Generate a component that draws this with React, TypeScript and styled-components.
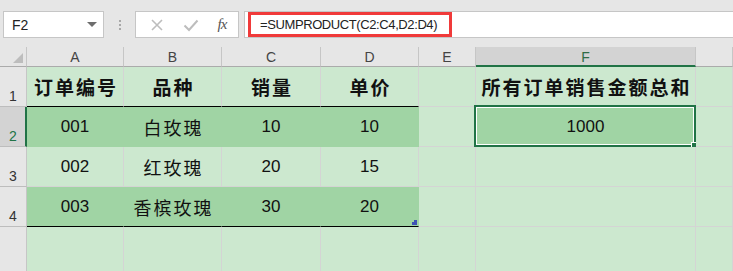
import React from 'react';
import styled, { createGlobalStyle } from 'styled-components';

const GlobalStyle = createGlobalStyle`
  html, body {
    margin: 0;
    padding: 0;
    overflow: hidden;
    background: #e6e6e6;
  }
  body {
    font-family: 'Liberation Sans', 'Noto Sans CJK SC', sans-serif;
  }
`;

const Page = styled.div`
  width: 733px;
  height: 271px;
  overflow: hidden;
  background: #e6e6e6;
`;

const Toolbar = styled.div`
  height: 47px;
  display: flex;
  align-items: flex-start;
  padding: 11px 0 0 3px;
  box-sizing: border-box;
`;

const NameBox = styled.div`
  width: 101px;
  height: 27px;
  box-sizing: border-box;
  background: #fff;
  border: 1px solid #c6c6c6;
  display: flex;
  align-items: center;
  justify-content: space-between;
  padding: 0 6px 0 8px;
  font-size: 14px;
  color: #222;
`;

const Caret = styled.span`
  width: 0;
  height: 0;
  border-left: 5px solid transparent;
  border-right: 5px solid transparent;
  border-top: 5px solid #6d6d6d;
`;

const Grip = styled.div`
  width: 31px;
  height: 27px;
  display: flex;
  flex-direction: column;
  align-items: center;
  justify-content: center;
  gap: 2px;

  span {
    width: 2px;
    height: 2px;
    background: #a8a8a8;
  }
`;

const IconBox = styled.div`
  width: 104px;
  height: 27px;
  box-sizing: border-box;
  background: #fff;
  border: 1px solid #c6c6c6;
  display: flex;
  align-items: center;
  justify-content: space-around;
  padding: 0 2px 0 4px;
`;

const Fx = styled.span`
  font-family: 'Liberation Serif', serif;
  font-style: italic;
  font-size: 15px;
  color: #555;
  letter-spacing: -1px;
`;

const FormulaField = styled.div`
  flex: 1;
  height: 27px;
  margin-left: 5px;
  box-sizing: border-box;
  background: #fff;
  border: 1px solid #c6c6c6;
  border-right: none;
  display: flex;
  align-items: center;
  padding-left: 3px;
`;

const Highlight = styled.span`
  display: inline-flex;
  align-items: center;
  height: 25px;
  box-sizing: border-box;
  border: 3px solid #f03a3a;
  padding: 0 12px 0 9px;
  font-size: 13px;
  letter-spacing: -0.4px;
  color: #222;
`;

const Sheet = styled.div`
  display: grid;
  grid-template-columns: 27px 97px 98px 99px 98px 57px 220px 1fr;
  grid-template-rows: 20px repeat(4, 40px) 64px;
`;

const Corner = styled.div`
  position: relative;
  background: #e6e6e6;
  border-right: 1px solid #c6c6c6;
  border-bottom: 1px solid #ababab;

  &::after {
    content: '';
    position: absolute;
    right: 3px;
    bottom: 3px;
    width: 0;
    height: 0;
    border-left: 10px solid transparent;
    border-bottom: 10px solid #bdbdbd;
  }
`;

const ColHead = styled.div<{ $active?: boolean }>`
  box-sizing: border-box;
  display: flex;
  align-items: center;
  justify-content: center;
  font-size: 14px;
  color: ${(p) => (p.$active ? '#2f6b45' : '#444')};
  background: ${(p) => (p.$active ? '#d3d3d3' : '#e6e6e6')};
  border-right: 1px solid #c6c6c6;
  border-bottom: ${(p) => (p.$active ? '2px solid #217346' : '1px solid #ababab')};
  padding-top: 1px;
`;

const RowHead = styled.div<{ $active?: boolean }>`
  box-sizing: border-box;
  display: flex;
  align-items: flex-end;
  padding: 0 0 2px 9px;
  font-size: 14px;
  color: ${(p) => (p.$active ? '#217346' : '#333')};
  background: ${(p) => (p.$active ? '#d3d3d3' : '#e6e6e6')};
  border-right: ${(p) => (p.$active ? '2px solid #217346' : '1px solid #c6c6c6')};
  border-bottom: 1px solid #bdbdbd;
`;

const Cell = styled.div<{ $dark?: boolean; $rule?: boolean; $bold?: boolean; $cjk?: boolean }>`
  position: relative;
  box-sizing: border-box;
  display: flex;
  align-items: center;
  justify-content: center;
  background: ${(p) => (p.$dark ? '#a0d4a4' : '#cce8cf')};
  border-right: 1px solid ${(p) => (p.$dark ? '#a0d4a4' : '#d4d4d4')};
  border-bottom: 1px solid ${(p) => (p.$rule ? '#000' : p.$dark ? '#a0d4a4' : '#d4d4d4')};
  font-size: ${(p) => (p.$cjk ? (p.$bold ? '19px' : '18px') : '17px')};
  font-weight: ${(p) => (p.$bold ? 700 : 400)};
  letter-spacing: ${(p) => (p.$cjk ? '2px' : '0')};
  text-indent: ${(p) => (p.$cjk ? '2px' : '0')};
  color: #111;
  white-space: nowrap;
`;

const Selection = styled.div`
  position: absolute;
  inset: -2px -1px -1px -2px;
  border: 2px solid #217346;
  outline: 1px solid #fff;
  outline-offset: -3px;
  pointer-events: none;
`;

const FillHandle = styled.div`
  position: absolute;
  right: -4px;
  bottom: -4px;
  width: 5px;
  height: 5px;
  background: #217346;
  border: 1px solid #fff;
`;

const CornerMark = styled.svg`
  position: absolute;
  right: 1px;
  bottom: 1px;
`;

const columns = ['A', 'B', 'C', 'D', 'E', 'F', 'G'];

type Row = { id: string; name: string; qty: string; price: string };

const rows: Row[] = [
  { id: '001', name: '白玫瑰', qty: '10', price: '10' },
  { id: '002', name: '红玫瑰', qty: '20', price: '15' },
  { id: '003', name: '香槟玫瑰', qty: '30', price: '20' },
];

const App = () => {
  return (
    <Page>
      <GlobalStyle />
      <Toolbar>
        <NameBox>
          F2
          <Caret />
        </NameBox>
        <Grip>
          <span />
          <span />
          <span />
        </Grip>
        <IconBox>
          <svg width="14" height="14" viewBox="0 0 14 14">
            <path d="M2 2 L12 12 M12 2 L2 12" stroke="#bdbdbd" strokeWidth="1.6" fill="none" />
          </svg>
          <svg width="16" height="14" viewBox="0 0 16 14">
            <path d="M1.5 7.5 L6 12 L14.5 2.5" stroke="#bdbdbd" strokeWidth="2" fill="none" />
          </svg>
          <Fx>fx</Fx>
        </IconBox>
        <FormulaField>
          <Highlight>=SUMPRODUCT(C2:C4,D2:D4)</Highlight>
        </FormulaField>
      </Toolbar>

      <Sheet>
        <Corner />
        {columns.map((c) => (
          <ColHead key={c} $active={c === 'F'}>
            {c === 'G' ? '' : c}
          </ColHead>
        ))}

        <RowHead>1</RowHead>
        <Cell $rule $bold $cjk>订单编号</Cell>
        <Cell $rule $bold $cjk>品种</Cell>
        <Cell $rule $bold $cjk>销量</Cell>
        <Cell $rule $bold $cjk>单价</Cell>
        <Cell />
        <Cell $bold $cjk>所有订单销售金额总和</Cell>
        <Cell />

        {rows.map((r, i) => {
          const dark = i !== 1;
          const last = i === rows.length - 1;
          return (
            <React.Fragment key={r.id}>
              <RowHead $active={i === 0}>{i + 2}</RowHead>
              <Cell $dark={dark} $rule={last}>{r.id}</Cell>
              <Cell $dark={dark} $rule={last} $cjk>{r.name}</Cell>
              <Cell $dark={dark} $rule={last}>{r.qty}</Cell>
              <Cell $dark={dark} $rule={last}>
                {r.price}
                {last && (
                  <CornerMark width="5" height="5" viewBox="0 0 5 5">
                    <path d="M2 0 H5 V5 H0 V2 H2 Z" fill="#3f51b5" />
                  </CornerMark>
                )}
              </Cell>
              <Cell />
              {i === 0 ? (
                <Cell $dark>
                  1000
                  <Selection>
                    <FillHandle />
                  </Selection>
                </Cell>
              ) : (
                <Cell />
              )}
              <Cell />
            </React.Fragment>
          );
        })}

        <RowHead />
        {columns.map((c) => (
          <Cell key={c} />
        ))}
      </Sheet>
    </Page>
  );
};

export default App;
